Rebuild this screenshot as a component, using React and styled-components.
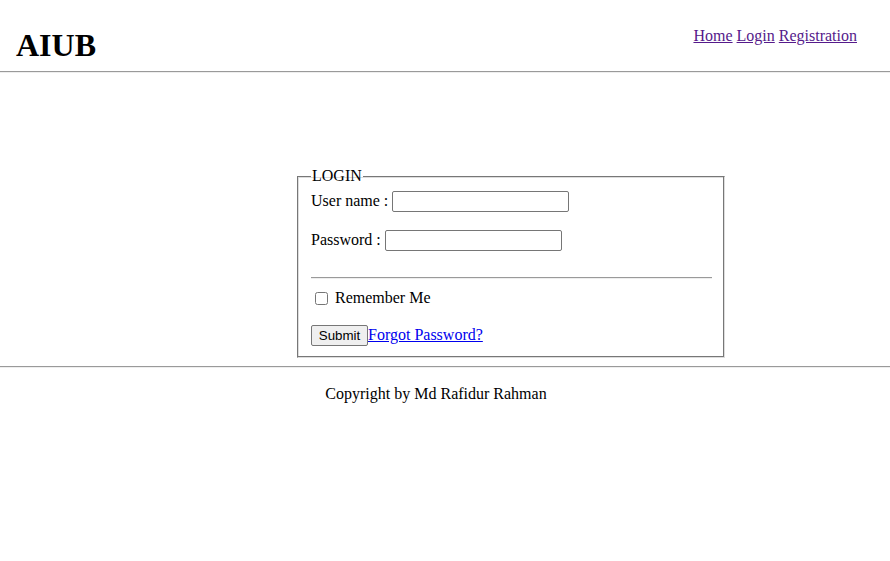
import React from "react";
import styled, { createGlobalStyle } from "styled-components";

const GlobalStyle = createGlobalStyle`
  body {
    margin: 0;
    background: #fff;
    font-family: "Liberation Serif", "Times New Roman", serif;
    font-size: 16px;
    color: #000;
  }
`;

const Page = styled.div`
  width: 890px;
`;

const Header = styled.header`
  display: flex;
  justify-content: space-between;
  align-items: flex-start;
  padding: 0 33px 0 16px;
`;

const Title = styled.h1`
  margin: 27px 0 7px;
  font-size: 32px;
  font-weight: bold;
  line-height: 37px;
`;

const Nav = styled.nav`
  padding-top: 26px;
  line-height: 19px;
  a {
    color: #551a8b;
  }
`;

const Rule = styled.hr`
  margin: 0;
  border: none;
  border-top: 1px solid #9a9a9a;
  border-bottom: 1px solid #eeeeee;
`;

const Main = styled.main`
  display: flex;
  padding: 94px 0 8px 297px;
`;

const Box = styled.fieldset`
  width: 401px;
  margin: 0;
  padding: 0 12px 11px 13px;
  border-color: #777 #ddd #ddd #777;
  border-style: solid;
  border-width: 1px;
  box-shadow: inset -1px -1px 0 #777, inset 1px 1px 0 #ddd;
`;

const Legend = styled.legend`
  padding: 0 1px;
  margin-left: 0;
  line-height: 18px;
`;

const Row = styled.div`
  display: flex;
  align-items: center;
  height: 22px;
  margin-top: ${(p) => p.$gap || 0}px;
`;

const Label = styled.span`
  margin-right: 4px;
  white-space: pre;
`;

const Input = styled.input`
  box-sizing: border-box;
  width: 177px;
  height: 21px;
  border: 1px solid #767676;
  border-radius: 2px;
  padding: 1px 2px;
  font-family: "Liberation Sans", Arial, sans-serif;
  font-size: 13.33px;
`;

const Divider = styled.hr`
  margin: 26px 0 0;
  border: none;
  border-top: 1px solid #9a9a9a;
  border-bottom: 1px solid #eee;
`;

const Check = styled.input`
  width: 13px;
  height: 13px;
  margin: 0 7px 0 4px;
`;

const Button = styled.button`
  box-sizing: border-box;
  height: 21px;
  width: 57px;
  padding: 0 6px;
  font-family: "Liberation Sans", Arial, sans-serif;
  font-size: 13.33px;
  background: #efefef;
  border: 1px solid #767676;
  border-radius: 2px;
  color: #000;
`;

const Link = styled.a`
  color: #0000ee;
`;

const Footer = styled.footer`
  text-align: center;
  padding: 17px 18px 0 0;
`;

export default function App() {
  return (
    <Page>
      <GlobalStyle />
      <Header>
        <Title>AIUB</Title>
        <Nav>
          <a href="#home">Home</a> <a href="#login">Login</a>{" "}
          <a href="#registration">Registration</a>
        </Nav>
      </Header>
      <Rule />
      <Main>
        <Box>
          <Legend>LOGIN</Legend>
          <Row $gap={5}>
            <Label>User name :</Label>
            <Input type="text" />
          </Row>
          <Row $gap={17}>
            <Label>Password :</Label>
            <Input type="password" />
          </Row>
          <Divider />
          <Row $gap={8}>
            <Check type="checkbox" />
            <span>Remember Me</span>
          </Row>
          <Row $gap={15}>
            <Button type="button">Submit</Button>
            <Link href="#forgot">Forgot Password?</Link>
          </Row>
        </Box>
      </Main>
      <Rule />
      <Footer>Copyright by Md Rafidur Rahman</Footer>
    </Page>
  );
}
